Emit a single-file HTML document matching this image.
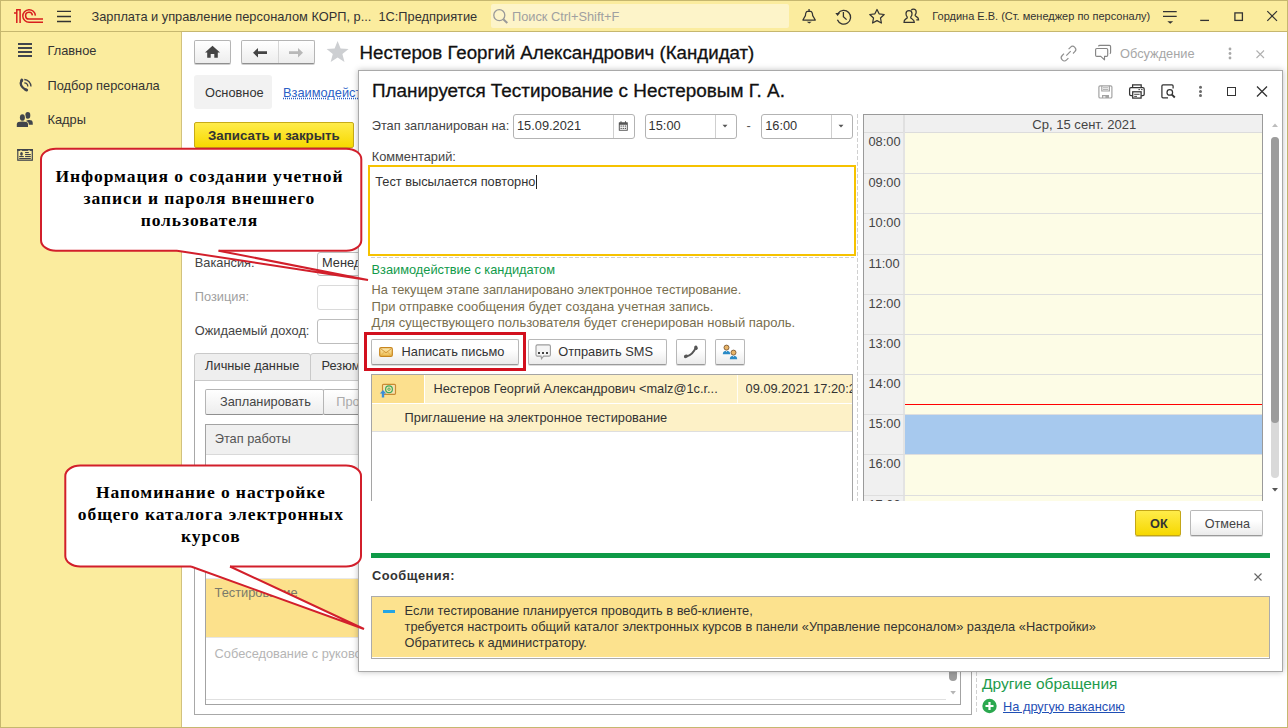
<!DOCTYPE html>
<html><head><meta charset="utf-8">
<style>
*{margin:0;padding:0;box-sizing:border-box}
html,body{width:1288px;height:728px;overflow:hidden;background:#fff}
body{position:relative;font-family:"Liberation Sans",sans-serif;font-size:13px;color:#333}
.a{position:absolute}
.t{position:absolute;white-space:nowrap;line-height:1}
svg{position:absolute;overflow:visible}
.sb{font-family:"Liberation Serif",serif;font-weight:bold}
</style></head><body>

<!-- 10_frame.py -->

<div class="a" style="left:0px;top:0px;width:1288px;height:728px;background:#FBEC9E"></div>
<div class="a" style="left:0px;top:0px;width:1288px;height:1px;background:#C6B76F"></div>
<div class="a" style="left:0px;top:31px;width:1288px;height:1px;background:#C6B76F"></div>
<div class="a" style="left:0px;top:0px;width:1px;height:728px;background:#C6B76F"></div>
<div class="a" style="left:1287px;top:0px;width:1px;height:728px;background:#C6B76F"></div>
<div class="a" style="left:0px;top:726.5px;width:1288px;height:1.5px;background:#C6B76F"></div>
<div class="a" style="left:182px;top:32px;width:1105px;height:695px;background:#fff"></div>
<div class="a" style="left:181px;top:32px;width:1px;height:695px;background:#D2C27E"></div>
<svg style="left:0px;top:0px;" width="60" height="30" viewBox="0 0 60 30"><g fill="none" stroke="#D81E1E" stroke-width="1.5"><path d="M14 12.9 H16.8 M16.8 23 V9.7 H20.1 V23"/><path d="M35.4 15.6 A6.3 6.3 0 1 0 29.2 22.3 H43"/><path d="M32.4 15.4 A3.4 3.4 0 1 0 29.2 19.1 H43"/></g></svg>
<svg style="left:0px;top:0px;" width="80" height="30" viewBox="0 0 80 30"><g stroke="#333" stroke-width="1.3"><path d="M57 11.4H71M57 16.5H71M57 21.5H71"/></g></svg>
<div class="t" style="left:91.50px;top:10.86px;font-size:12.8px;color:#333">Зарплата и управление персоналом КОРП, р...&nbsp; 1С:Предприятие</div>
<div class="a" style="left:491px;top:4px;width:298px;height:24px;background:#FDF4C9;border-radius:2px"></div>
<svg style="left:0px;top:0px;" width="520" height="30" viewBox="0 0 520 30"><g fill="none" stroke="#999" stroke-width="1.3"><circle cx="499.3" cy="15.2" r="5.5"/><path d="M503.3 19.2 L507.3 22.9" stroke-width="2"/></g></svg>
<div class="t" style="left:512.00px;top:10.56px;font-size:12.8px;color:#A0A0A0">Поиск Ctrl+Shift+F</div>
<svg style="left:0px;top:0px;left:0;top:0" width="1288" height="30" viewBox="0 0 1288 30"><g fill="none" stroke="#333" stroke-width="1.25" stroke-linejoin="round"><path d="M802.9 20 H815.3 L812.7 15.6 C812.5 13 812.1 11.4 810.5 11.4 H807.5 C805.9 11.4 805.6 13 805.4 15.6 Z"/></g><rect x="808.4" y="9" width="1.3" height="2.4" fill="#333"/><path d="M806.7 21.8 H811.7 L809.2 23.6Z" fill="#333"/><g fill="none" stroke="#333" stroke-width="1.3"><path d="M838.1 13.4 A6.85 6.85 0 1 1 837.4 19.8"/><path d="M843.4 12 V16.6 L846.6 19.6"/></g><path d="M835.3 13 H840 L837.6 15.9Z" fill="#333"/><path d="M877 9.5 L879.1 13.8 L884.2 14.5 L880.5 18 L881.4 23 L877 20.6 L872.6 23 L873.5 18 L869.8 14.5 L874.9 13.8 Z" fill="none" stroke="#333" stroke-width="1.25" stroke-linejoin="round"/><g fill="none" stroke="#333" stroke-width="1.25"><path d="M904 22.3 H914.3 C914.5 19.5 912 19 910.8 18 C910.7 17.5 910.7 17 911 16.6 C911.8 15.8 912 14.8 912 13.7 C912 11.9 910.7 10.7 909 10.7 C907.3 10.7 906 11.9 906 13.7 C906 14.8 906.3 15.8 907 16.6 C907.3 17 907.3 17.5 907.2 18 C906 19 903.6 19.5 904 22.3Z"/><path d="M911.2 10.3 C911.7 9.5 912.5 9.1 913.5 9.1 C915.1 9.1 916.2 10.2 916.2 12 C916.2 13 915.9 14 915.2 14.8 C915 15.3 915.1 15.7 915.5 16 C916.8 17 918.8 17.5 918.6 19.9 H916.3"/></g><g stroke="#333" stroke-width="1.2"><path d="M1163 11.6H1176.7M1163 16.4H1176.7"/></g><path d="M1167.3 21.2 H1173.2 L1170.25 23.7Z" fill="#333"/><path d="M1200.2 20.4 H1209" stroke="#333" stroke-width="1.3"/><rect x="1234.9" y="12.9" width="7.5" height="7.5" fill="none" stroke="#333" stroke-width="1.3"/><path d="M1267.3 11.2 L1277 20.9 M1277 11.2 L1267.3 20.9" stroke="#333" stroke-width="1.2"/></svg>
<div class="t" style="left:932.30px;top:10.89px;font-size:11px;color:#333">Гордина Е.В. (Ст. менеджер по персоналу)</div>
<!-- 20_sidebar.py -->

<svg style="left:0px;top:0px;top:0" width="40" height="40" viewBox="0 0 40 40"><g stroke="#40444C" stroke-width="2"><path d="M18 44H32M18 48H32M18 52H32M18 56H32"/></g></svg>
<div class="t" style="left:47.50px;top:44.56px;font-size:12.8px;color:#333">Главное</div>
<svg style="left:0px;top:0px;left:0;top:0" width="60" height="100" viewBox="0 0 60 100"><path d="M21.6 80.6 Q18.6 85.5 25.8 89.9" fill="none" stroke="#40444C" stroke-width="2.4"/><ellipse cx="21.7" cy="80.4" rx="1.5" ry="1.9" transform="rotate(25 21.7 80.4)" fill="#40444C"/><ellipse cx="26.3" cy="89.8" rx="1.9" ry="1.5" transform="rotate(25 26.3 89.8)" fill="#40444C"/><g fill="none" stroke="#40444C" stroke-width="1.3"><path d="M24.3 82.9 A3.7 3.7 0 0 1 27.8 86.6"/><path d="M24.3 79.5 A7 7 0 0 1 31 86.6"/></g></svg>
<div class="t" style="left:47.50px;top:79.56px;font-size:12.8px;color:#333">Подбор персонала</div>
<svg style="left:0px;top:0px;left:0;top:0" width="60" height="140" viewBox="0 0 60 140"><g fill="#40444C"><ellipse cx="27.8" cy="115.4" rx="2.5" ry="3.3"/><path d="M26 121 C27.5 119.8 30.5 119.6 31.8 120.6 C32.6 121.3 32.8 122.5 32.8 124.8 H27 Z"/></g><g fill="#40444C" stroke="#FBEC9E" stroke-width="1.6" paint-order="stroke"><ellipse cx="22.4" cy="117.6" rx="2.5" ry="3.4"/><path d="M16.8 127 V124 C16.8 122.4 19 121.6 22.4 121.6 C25.8 121.6 28 122.4 28 124 V127 Z"/></g></svg>
<div class="t" style="left:47.50px;top:114.16px;font-size:12.8px;color:#333">Кадры</div>
<svg style="left:0px;top:0px;left:0;top:0" width="60" height="170" viewBox="0 0 60 170"><rect x="17.8" y="149.6" width="14.5" height="10.6" fill="none" stroke="#40444C" stroke-width="1.2"/><rect x="17.2" y="149" width="15.7" height="1.9" fill="#40444C"/><circle cx="21" cy="151.2" r="1.05" fill="#FBEC9E"/><circle cx="29" cy="151.2" r="1.05" fill="#FBEC9E"/><g fill="#40444C"><ellipse cx="21.5" cy="153.9" rx="1.35" ry="1.8"/><rect x="19.2" y="156" width="4.6" height="1.1"/><rect x="25.1" y="152" width="3.7" height="1.1"/><rect x="25.1" y="154" width="5.7" height="1.1"/><rect x="25.1" y="156" width="5.7" height="1.1"/><rect x="19.2" y="158" width="11.6" height="1.1"/></g></svg>
<!-- 30_mainform.py -->

<div class="a" style="left:194px;top:40px;width:37px;height:24px;background:linear-gradient(#FFFFFF,#EDEDED);border:1px solid #B5B5B5;border-bottom-color:#8F8F8F;border-radius:2px;box-shadow:0 1px 0 #D0D0D0"></div>
<svg style="left:194px;top:40px;" width="37" height="24" viewBox="0 0 37 24"><path d="M18.5 5.8 L26 12.6 H23.8 V17.8 H20.3 V14 H16.7 V17.8 H13.2 V12.6 H11 Z" fill="#454545"/></svg>
<div class="a" style="left:241px;top:40px;width:74px;height:24px;background:linear-gradient(#FFFFFF,#EDEDED);border:1px solid #B5B5B5;border-bottom-color:#8F8F8F;border-radius:2px;box-shadow:0 1px 0 #D0D0D0"></div>
<div class="a" style="left:278px;top:41px;width:1px;height:22px;background:#D6D6D6"></div>
<svg style="left:241px;top:40px;" width="74" height="24" viewBox="0 0 74 24"><path d="M12 12.7 L17 8 V11.3 H26 V14.1 H17 V17.4 Z" fill="#444"/><path d="M62 12.7 L57 8 V11.3 H48 V14.1 H57 V17.4 Z" fill="#B8B8B8"/></svg>
<svg style="left:324px;top:39px;" width="28" height="26" viewBox="0 0 28 26"><path d="M13.6 2 L16.6 9.6 L24.6 10 L18.4 15 L20.5 23 L13.6 18.4 L6.7 23 L8.8 15 L2.6 10 L10.6 9.6Z" fill="#CDCFD2"/></svg>
<div class="t" style="left:359.50px;top:43.87px;font-size:18.7px;color:#111;-webkit-text-stroke:0.3px #111">Нестеров Георгий Александрович (Кандидат)</div>
<svg style="left:0px;top:0px;left:0;top:0" width="1288" height="70" viewBox="0 0 1288 70"><g fill="none" stroke="#8E8E8E" stroke-width="1.15"><path d="M1068.6 49.1 L1070.4 47.3 A3.1 3.1 0 0 1 1074.8 51.7 L1073 53.5"/><path d="M1064 53.7 L1062.2 55.5 A3.1 3.1 0 0 0 1066.6 59.9 L1068.4 58.1"/><path d="M1066.3 55.6 L1070.7 51.1"/></g><g fill="none" stroke="#858585" stroke-width="1.15" stroke-linejoin="round"><path d="M1098.5 46.4 Q1098.7 45.4 1099.8 45.4 H1109.4 Q1110.6 45.4 1110.6 46.6 V52.4 Q1110.6 53.3 1109.8 53.6"/><path d="M1096.8 48.5 H1106.5 Q1107.7 48.5 1107.7 49.7 V55.2 Q1107.7 56.4 1106.5 56.4 H1104.5 V59.8 L1100.8 56.4 H1096.8 Q1095.6 56.4 1095.6 55.2 V49.7 Q1095.6 48.5 1096.8 48.5Z"/></g></svg>
<div class="t" style="left:1120.00px;top:48.06px;font-size:12.8px;color:#A6A6A6">Обсуждение</div>
<svg style="left:1225px;top:44px;" width="10" height="18" viewBox="0 0 10 18"><g fill="#A8A8A8"><circle cx="5" cy="5" r="1.4"/><circle cx="5" cy="9.5" r="1.4"/><circle cx="5" cy="14" r="1.4"/></g></svg>
<svg style="left:1252px;top:46px;" width="16" height="16" viewBox="0 0 16 16"><path d="M4.5 4.5L12 12M12 4.5L4.5 12" stroke="#B0B0B0" stroke-width="1.1"/></svg>
<div class="a" style="left:194px;top:75px;width:78px;height:34px;background:#F2F2F2;border-radius:3px"></div>
<div class="t" style="left:205.00px;top:86.66px;font-size:12.8px;color:#333">Основное</div>
<div class="t" style="left:283.00px;top:86.66px;font-size:12.8px;color:#2B5FC7;text-decoration:underline dotted">Взаимодействие</div>
<div class="a" style="left:194px;top:122px;width:160px;height:26px;background:linear-gradient(#FFEC4A,#F7D900);border:1px solid #C7AB18;border-radius:2px"></div>
<div class="t" style="left:208.00px;top:129.24px;font-size:13.3px;color:#333;font-weight:bold">Записать и закрыть</div>
<div class="t" style="left:194.80px;top:257.36px;font-size:12.8px;color:#444">Вакансия:</div>
<div class="a" style="left:317px;top:252px;width:60px;height:24px;border:1px solid #BDBDBD;border-radius:3px;background:#fff"></div>
<div class="t" style="left:322.00px;top:257.36px;font-size:12.8px;color:#333">Менеджер</div>
<div class="t" style="left:194.80px;top:291.16px;font-size:12.8px;color:#A0A0A0">Позиция:</div>
<div class="a" style="left:317px;top:285px;width:60px;height:25px;border:1px solid #DADADA;border-radius:3px;background:#fff"></div>
<div class="t" style="left:194.80px;top:325.16px;font-size:12.8px;color:#444">Ожидаемый доход:</div>
<div class="a" style="left:317px;top:319px;width:60px;height:25px;border:1px solid #BDBDBD;border-radius:3px;background:#fff"></div>
<div class="a" style="left:194px;top:353px;width:117px;height:28px;background:#EEEEEE;border:1px solid #C9C9C9;border-radius:3px 3px 0 0"></div>
<div class="t" style="left:205.10px;top:360.46px;font-size:12.8px;color:#333">Личные данные</div>
<div class="a" style="left:310px;top:353px;width:60px;height:28px;background:#EEEEEE;border:1px solid #C9C9C9;border-radius:3px 3px 0 0"></div>
<div class="t" style="left:321.50px;top:360.46px;font-size:12.8px;color:#333">Резюме</div>
<div class="a" style="left:194px;top:380px;width:778px;height:335px;border:1px solid #A8A8A8;border-top:1px solid #C9C9C9;background:#fff"></div>
<div class="a" style="left:205px;top:389px;width:119px;height:26px;background:linear-gradient(#FFFFFF,#EDEDED);border:1px solid #B5B5B5;border-bottom-color:#8F8F8F;border-radius:2px"></div>
<div class="a" style="left:323px;top:389px;width:60px;height:26px;background:linear-gradient(#FFFFFF,#EDEDED);border:1px solid #B5B5B5;border-bottom-color:#8F8F8F;border-radius:2px"></div>
<div class="t" style="left:220.00px;top:396.36px;font-size:12.8px;color:#444">Запланировать</div>
<div class="t" style="left:336.30px;top:396.36px;font-size:12.8px;color:#AAAAAA">Провести</div>
<div class="a" style="left:205px;top:424px;width:756px;height:281px;border:1px solid #A3A3A3;background:#fff"></div>
<div class="a" style="left:206px;top:425px;width:754px;height:30px;background:#F0F0F0;border-bottom:1px solid #D9D9D9"></div>
<div class="t" style="left:214.70px;top:433.16px;font-size:12.8px;color:#555">Этап работы</div>
<div class="a" style="left:206px;top:578px;width:754px;height:59px;background:#FCE18C;border-top:1px solid #E8E8E8"></div>
<div class="t" style="left:214.60px;top:586.56px;font-size:12.8px;color:#7A7A6A">Тестирование</div>
<div class="t" style="left:214.60px;top:647.56px;font-size:12.8px;color:#B5B5B5">Собеседование с руководителем</div>
<div class="a" style="left:206px;top:637px;width:754px;height:1px;background:#E6E6E6"></div>
<div class="a" style="left:206px;top:699px;width:740px;height:1px;background:#E0E0E0"></div>
<div class="a" style="left:949px;top:664px;width:8px;height:16.5px;background:#9C9C9C;border-radius:4px"></div>
<svg style="left:946px;top:688px;" width="12" height="8" viewBox="0 0 12 8"><path d="M4.3 3 H9.9 L7.1 6.5Z" fill="#B5B5B5"/></svg>
<svg style="left:0px;top:0px;left:0;top:0" width="1288" height="728" viewBox="0 0 1288 728"><path d="M976.5 672 V714" stroke="#D0D0D0" stroke-width="1" stroke-dasharray="4 2"/></svg>
<div class="t" style="left:982.00px;top:676.28px;font-size:15.5px;color:#1E9B4B">Другие обращения</div>
<svg style="left:981px;top:697px;" width="18" height="18" viewBox="0 0 18 18"><circle cx="8.5" cy="9" r="7.2" fill="#2BA84F"/><path d="M8.5 5 V13 M4.5 9 H12.5" stroke="#fff" stroke-width="2.2"/></svg>
<div class="t" style="left:1003.00px;top:700.56px;font-size:12.8px;color:#1F4FB5;text-decoration:underline">На другую вакансию</div>
<!-- 40_dialog.py -->

<div class="a" style="left:358px;top:70px;width:925px;height:602px;background:#fff;border:1px solid #A9A9A9;box-shadow:0 0 6px rgba(0,0,0,0.25)"></div>
<div class="t" style="left:372.00px;top:82.20px;font-size:18.9px;color:#111;-webkit-text-stroke:0.3px #111">Планируется Тестирование с Нестеровым Г. А.</div>
<svg style="left:0px;top:0px;left:0;top:0" width="1288" height="110" viewBox="0 0 1288 110"><g fill="none" stroke="#A3A3A3" stroke-width="1.2"><rect x="1098.9" y="85.8" width="13" height="12.2" rx="1.3"/><path d="M1101.8 85.8 V91 H1109.4 V85.8"/><path d="M1103 87.8 H1108.2 M1103 89.6 H1108.2" stroke-width="0.9"/><path d="M1102.6 98 V95.6 H1108.4 V98"/></g><rect x="1105.4" y="95.6" width="3" height="2.4" fill="#A3A3A3"/><g fill="none" stroke="#333" stroke-width="1.25"><path d="M1132.6 87.4 V84.9 H1141.2 V87.4"/><path d="M1132.6 95.6 H1131 Q1129.6 95.6 1129.6 94.2 V89 Q1129.6 87.6 1131 87.6 H1142.8 Q1144.2 87.6 1144.2 89 V94.2 Q1144.2 95.6 1142.8 95.6 H1141.2"/><rect x="1132.7" y="91.8" width="8.4" height="6.3" fill="#fff"/></g><path d="M1134.2 94.3 H1139.6 M1134.2 96.4 H1137" stroke="#333" stroke-width="0.9"/><path d="M1138.4 89.6 H1140 M1141 89.6 H1142.6" stroke="#333" stroke-width="0.9"/><g fill="none" stroke="#333" stroke-width="1.25"><path d="M1168 97.9 H1163 Q1161.9 97.9 1161.9 96.8 V86 Q1161.9 84.9 1163 84.9 H1172 Q1173.1 84.9 1173.1 86 V88.5"/><circle cx="1169.8" cy="92.4" r="2.8"/><path d="M1171.9 94.6 L1174.8 97.5" stroke-width="1.9"/></g></svg>
<svg style="left:1195px;top:82px;" width="10" height="18" viewBox="0 0 10 18"><g fill="#6A6A6A"><circle cx="5.5" cy="5.3" r="1.5"/><circle cx="5.5" cy="9.4" r="1.5"/><circle cx="5.5" cy="13.5" r="1.5"/></g></svg>
<div class="a" style="left:1227.4px;top:87px;width:8.8px;height:8.8px;border:1.3px solid #333"></div>
<svg style="left:1254px;top:84px;" width="16" height="16" viewBox="0 0 16 16"><path d="M3 2.5L13 12.5M13 2.5L3 12.5" stroke="#333" stroke-width="1.3"/></svg>
<div class="t" style="left:371.70px;top:120.26px;font-size:12.8px;color:#444">Этап запланирован на:</div>
<div class="a" style="left:513px;top:114px;width:122px;height:25px;border:1px solid #B3B3B3;border-radius:3px;background:#fff"></div>
<div class="a" style="left:613px;top:115px;width:1px;height:23px;background:#CFCFCF"></div>
<div class="t" style="left:517.00px;top:120.26px;font-size:12.8px;color:#333">15.09.2021</div>
<svg style="left:617px;top:120px;" width="12" height="12" viewBox="0 0 12 12"><g fill="#555"><rect x="1.8" y="2.3" width="9" height="8.5" rx="0.5"/></g><g fill="#fff"><rect x="2.8" y="4.8" width="7" height="5"/></g><g fill="#555"><rect x="3.5" y="5.5" width="1.3" height="1.2"/><rect x="5.6" y="5.5" width="1.3" height="1.2"/><rect x="7.7" y="5.5" width="1.3" height="1.2"/><rect x="3.5" y="7.8" width="1.3" height="1.2"/><rect x="5.6" y="7.8" width="1.3" height="1.2"/><rect x="7.7" y="7.8" width="1.3" height="1.2"/><rect x="3.5" y="1.2" width="1" height="2"/><rect x="8" y="1.2" width="1" height="2"/></g></svg>
<div class="a" style="left:645px;top:114px;width:92px;height:25px;border:1px solid #B3B3B3;border-radius:3px;background:#fff"></div>
<div class="a" style="left:715px;top:115px;width:1px;height:23px;background:#CFCFCF"></div>
<div class="t" style="left:648.60px;top:120.26px;font-size:12.8px;color:#333">15:00</div>
<svg style="left:720px;top:122px;" width="10" height="8" viewBox="0 0 10 8"><path d="M2.5 2.8 H7.5 L5 5.5Z" fill="#555"/></svg>
<div class="t" style="left:746.50px;top:120.26px;font-size:12.8px;color:#555">-</div>
<div class="a" style="left:761px;top:114px;width:92px;height:25px;border:1px solid #B3B3B3;border-radius:3px;background:#fff"></div>
<div class="a" style="left:831px;top:115px;width:1px;height:23px;background:#CFCFCF"></div>
<div class="t" style="left:765.20px;top:120.26px;font-size:12.8px;color:#333">16:00</div>
<svg style="left:836px;top:122px;" width="10" height="8" viewBox="0 0 10 8"><path d="M2.5 2.8 H7.5 L5 5.5Z" fill="#555"/></svg>
<div class="t" style="left:371.70px;top:150.56px;font-size:12.8px;color:#444">Комментарий:</div>
<div class="a" style="left:368px;top:165px;width:488px;height:91px;border:2px solid #F6C200;background:#fff"></div>
<div class="t" style="left:375.20px;top:174.56px;font-size:12.8px;color:#333">Тест высылается повторно<span style="display:inline-block;width:1px;height:14px;background:#222;vertical-align:-3px;margin-left:0.5px"></span></div>
<svg style="left:0px;top:0px;left:0;top:0" width="1288" height="728" viewBox="0 0 1288 728"><path d="M371 257.5 H854" stroke="#D0D0D0" stroke-width="1" stroke-dasharray="4 2"/><path d="M857.5 114 V501" stroke="#D0D0D0" stroke-width="1" stroke-dasharray="4 2"/></svg>
<div class="t" style="left:371.50px;top:264.16px;font-size:12.8px;color:#119A4A">Взаимодействие с кандидатом</div>
<div class="t" style="left:371.60px;top:284.36px;font-size:12.8px;color:#786E4E">На текущем этапе запланировано электронное тестирование.</div>
<div class="t" style="left:371.60px;top:300.29px;font-size:13.01px;color:#786E4E">При отправке сообщения будет создана учетная запись.</div>
<div class="t" style="left:371.60px;top:316.29px;font-size:13.01px;color:#786E4E">Для существующего пользователя будет сгенерирован новый пароль.</div>
<div class="a" style="left:371px;top:339px;width:148px;height:26px;background:linear-gradient(#FFFFFF 40%,#EBEBEB);border:1px solid #B8B8B8;border-bottom-color:#9A9A9A;border-radius:2px;box-shadow:0 1px 0 #DCDCDC"></div>
<svg style="left:0px;top:0px;left:0;top:0" width="400" height="370" viewBox="0 0 400 370"><defs><linearGradient id="eg" x1="0" y1="0" x2="0" y2="1"><stop offset="0" stop-color="#FDEBB5"/><stop offset="1" stop-color="#EDBB4E"/></linearGradient></defs><rect x="379.7" y="347.7" width="12.6" height="8.6" rx="1.3" fill="url(#eg)" stroke="#C8861E" stroke-width="1.2"/><path d="M380.5 348.5 L386 352.8 L391.5 348.5" fill="none" stroke="#CD9030" stroke-width="0.9"/><path d="M381 355.5 L384.6 351.8 M391 355.5 L387.4 351.8" fill="none" stroke="#D9A545" stroke-width="0.7"/></svg>
<div class="t" style="left:401.60px;top:345.96px;font-size:12.8px;color:#333">Написать письмо</div>
<div class="a" style="left:363.5px;top:332px;width:162.5px;height:39px;border:3px solid #D2101E"></div>
<div class="a" style="left:528px;top:339px;width:139px;height:26px;background:linear-gradient(#FFFFFF 40%,#EBEBEB);border:1px solid #B8B8B8;border-bottom-color:#9A9A9A;border-radius:2px;box-shadow:0 1px 0 #DCDCDC"></div>
<svg style="left:0px;top:0px;left:0;top:0" width="600" height="370" viewBox="0 0 600 370"><path d="M537.4 344.9 H549 Q550.4 344.9 550.4 346.3 V354.7 Q550.4 356.1 549 356.1 H543.6 L541.5 358.8 L541 356.1 H537.4 Q536 356.1 536 354.7 V346.3 Q536 344.9 537.4 344.9Z" fill="#F4F4F4" stroke="#9C9C9C" stroke-width="1.1"/><g fill="#444"><rect x="538" y="352" width="2" height="2"/><rect x="542" y="352" width="2" height="2"/><rect x="546" y="352" width="2" height="2"/></g></svg>
<div class="t" style="left:558.20px;top:346.06px;font-size:12.8px;color:#333">Отправить SMS</div>
<div class="a" style="left:676px;top:339px;width:30px;height:26px;background:linear-gradient(#FFFFFF 40%,#EBEBEB);border:1px solid #B8B8B8;border-bottom-color:#9A9A9A;border-radius:2px;box-shadow:0 1px 0 #DCDCDC"></div>
<svg style="left:676px;top:338px;" width="30" height="28" viewBox="0 0 30 28"><path d="M10.3 18.6 Q16.8 16.8 19.8 9.6" fill="none" stroke="#555" stroke-width="2"/><ellipse cx="10" cy="18.3" rx="2.2" ry="1.7" transform="rotate(-25 10 18.3)" fill="#555"/><ellipse cx="20" cy="9.8" rx="1.7" ry="2.2" transform="rotate(-25 20 9.8)" fill="#555"/></svg>
<div class="a" style="left:715px;top:339px;width:30px;height:26px;background:linear-gradient(#FFFFFF 40%,#EBEBEB);border:1px solid #B8B8B8;border-bottom-color:#9A9A9A;border-radius:2px;box-shadow:0 1px 0 #DCDCDC"></div>
<svg style="left:715px;top:338px;" width="30" height="28" viewBox="0 0 30 28"><g><path d="M7.8 16.2 C7.8 13.8 9.5 12.8 11.5 12.8 C13.5 12.8 15.2 13.8 15.2 16.2 Z" fill="#2A8AC6"/><path d="M10.6 12.8 L11.5 14 L12.4 12.8Z" fill="#fff"/><circle cx="11.5" cy="9.6" r="2.5" fill="#E9B568" stroke="#6E4B28" stroke-width="0.8"/><path d="M14.8 21.2 C14.8 18.8 16.5 17.8 18.5 17.8 C20.5 17.8 22.2 18.8 22.2 21.2 Z" fill="#2A8AC6"/><path d="M17.6 17.8 L18.5 19 L19.4 17.8Z" fill="#fff"/><circle cx="18.5" cy="14.6" r="2.5" fill="#E9B568" stroke="#6E4B28" stroke-width="0.8"/></g></svg>
<div class="a" style="left:371px;top:374px;width:482px;height:127px;border:1px solid #A5A5A5;border-bottom:none;background:#fff"></div>
<div class="a" style="left:372px;top:375px;width:52px;height:28px;background:#FCE08E"></div>
<div class="a" style="left:425px;top:375px;width:427px;height:28px;background:#FDF1C7"></div>
<div class="a" style="left:737px;top:375px;width:1px;height:28px;background:#FFFDF5"></div>
<div class="a" style="left:372px;top:404px;width:480px;height:27px;background:#FDF1C7"></div>
<div class="a" style="left:372px;top:431px;width:480px;height:1px;background:#DEDEDE"></div>
<svg style="left:378px;top:382px;" width="20" height="18" viewBox="0 0 20 18"><rect x="4.5" y="2.3" width="13" height="10" rx="1" fill="#F5E2B0" stroke="#C88B33" stroke-width="1.2"/><circle cx="11" cy="7.2" r="3.4" fill="none" stroke="#3DAA5A" stroke-width="1.2"/><circle cx="11" cy="7.2" r="1.2" fill="none" stroke="#3DAA5A" stroke-width="0.9"/><path d="M5 8 L1.8 11.5 H3.8 V15.5 H6.2 V11.5 H8.2Z" fill="#3A8FD9"/></svg>
<div class="t" style="left:433.50px;top:383.16px;font-size:12.8px;color:#333">Нестеров Георгий Александрович &lt;malz@1c.r...</div>
<div class="t" style="left:745.60px;top:383.16px;font-size:12.8px;color:#333;width:106px;overflow:hidden">09.09.2021 17:20:27</div>
<div class="t" style="left:404.60px;top:412.46px;font-size:12.8px;color:#333">Приглашение на электронное тестирование</div>
<!-- 50_calendar.py -->

<div class="a" style="left:863px;top:114px;width:400px;height:387px;border:1px solid #9A9A9A;border-bottom:none;background:#FDFCE6;overflow:hidden"></div>
<div class="a" style="left:864px;top:115px;width:398px;height:18px;background:#F0F0F0;border-bottom:1px solid #DCDCDC"></div>
<div class="a" style="left:864px;top:133px;width:41px;height:368px;background:#F0F0F0;border-right:2px solid #E3E3E3"></div>
<div class="a" style="left:903px;top:115px;width:2px;height:18px;background:#E0E0E0"></div>
<div class="t" style="left:1032.30px;top:118.35px;font-size:13.05px;color:#444">Ср, 15 сент. 2021</div>
<div class="a" style="left:864px;top:173px;width:398px;height:1px;background:#DEDEDE"></div>
<div class="a" style="left:864px;top:213px;width:398px;height:1px;background:#DEDEDE"></div>
<div class="a" style="left:864px;top:254px;width:398px;height:1px;background:#DEDEDE"></div>
<div class="a" style="left:864px;top:294px;width:398px;height:1px;background:#DEDEDE"></div>
<div class="a" style="left:864px;top:334px;width:398px;height:1px;background:#DEDEDE"></div>
<div class="a" style="left:864px;top:374px;width:398px;height:1px;background:#DEDEDE"></div>
<div class="a" style="left:864px;top:414px;width:398px;height:1px;background:#DEDEDE"></div>
<div class="a" style="left:864px;top:454px;width:398px;height:1px;background:#DEDEDE"></div>
<div class="a" style="left:864px;top:495px;width:398px;height:1px;background:#DEDEDE"></div>
<div class="t" style="left:868.50px;top:135.86px;font-size:12.8px;color:#444">08:00</div>
<div class="t" style="left:868.50px;top:176.86px;font-size:12.8px;color:#444">09:00</div>
<div class="t" style="left:868.50px;top:216.86px;font-size:12.8px;color:#444">10:00</div>
<div class="t" style="left:868.50px;top:257.86px;font-size:12.8px;color:#444">11:00</div>
<div class="t" style="left:868.50px;top:297.86px;font-size:12.8px;color:#444">12:00</div>
<div class="t" style="left:868.50px;top:337.86px;font-size:12.8px;color:#444">13:00</div>
<div class="t" style="left:868.50px;top:377.86px;font-size:12.8px;color:#444">14:00</div>
<div class="t" style="left:868.50px;top:417.86px;font-size:12.8px;color:#444">15:00</div>
<div class="t" style="left:868.50px;top:457.86px;font-size:12.8px;color:#444">16:00</div>
<div class="t" style="left:868.50px;top:498.86px;font-size:12.8px;color:#444">17:00</div>
<div class="a" style="left:905px;top:415px;width:357px;height:39px;background:#A7C9EE"></div>
<div class="a" style="left:905px;top:404px;width:357px;height:1px;background:#FF0000"></div>
<div class="a" style="left:840px;top:501px;width:430px;height:12px;background:#fff"></div>
<svg style="left:1268px;top:120px;" width="14" height="10" viewBox="0 0 14 10"><path d="M4 7 H10 L7 3.5Z" fill="#BDBDBD"/></svg>
<div class="a" style="left:1271px;top:137px;width:8px;height:341px;background:#D9D9D9;border-radius:4px"></div>
<div class="a" style="left:1271px;top:137px;width:8px;height:286px;background:#9C9C9C;border-radius:4px"></div>
<svg style="left:1268px;top:485px;" width="14" height="10" viewBox="0 0 14 10"><path d="M4 3 H10 L7 6.5Z" fill="#555"/></svg>
<div class="a" style="left:1135px;top:510px;width:46px;height:26px;background:linear-gradient(#FFEC4A,#F6D800);border:1px solid #C4A617;border-radius:2px;box-shadow:0 1px 0 #D8D0A0"></div>
<div class="t" style="left:1149.80px;top:516.66px;font-size:13.4px;color:#333;font-weight:bold;transform:scaleX(0.95);transform-origin:left">ОК</div>
<div class="a" style="left:1190px;top:510px;width:73px;height:26px;background:linear-gradient(#FFFFFF 40%,#EBEBEB);border:1px solid #B8B8B8;border-bottom-color:#9A9A9A;border-radius:2px;box-shadow:0 1px 0 #DCDCDC"></div>
<div class="t" style="left:1204.80px;top:517.73px;font-size:12.6px;color:#444">Отмена</div>
<div class="a" style="left:371px;top:553px;width:899px;height:5px;background:#0E9A47"></div>
<div class="t" style="left:371.90px;top:569.56px;font-size:12.8px;color:#333;font-weight:bold;letter-spacing:0.5px">Сообщения:</div>
<svg style="left:1250px;top:569px;" width="16" height="16" viewBox="0 0 16 16"><path d="M4.5 4.5L11.5 11.5M11.5 4.5L4.5 11.5" stroke="#666" stroke-width="1.1"/></svg>
<div class="a" style="left:371px;top:596px;width:899px;height:63px;background:#FCE28E;border:1px solid #ABABAB;box-shadow:inset 0 -1px 0 #fff"></div>
<div class="a" style="left:383px;top:610px;width:11.5px;height:2.5px;background:#23A5E5"></div>
<div class="t" style="left:404.60px;top:604.96px;font-size:12.8px;color:#333">Если тестирование планируется проводить в веб-клиенте,</div>
<div class="t" style="left:404.60px;top:620.86px;font-size:12.8px;color:#333">требуется настроить общий каталог электронных курсов в панели «Управление персоналом» раздела «Настройки»</div>
<div class="t" style="left:404.60px;top:636.66px;font-size:12.8px;color:#333">Обратитесь к администратору.</div>
<!-- 90_callouts.py -->

<svg style="left:0px;top:0px;left:0;top:0" width="1288" height="728" viewBox="0 0 1288 728"><path d="M56 148.7 H346.3 A15 10.5 0 0 1 361.3 159.2 V240.2 A15 10.5 0 0 1 346.3 250.7 H218.6 L368 280 L177 250.7 H56 A15 10.5 0 0 1 41 240.2 V159.2 A15 10.5 0 0 1 56 148.7 Z" fill="#fff"/><path d="M177 250.7 H56 A15 10.5 0 0 1 41 240.2 V159.2 A15 10.5 0 0 1 56 148.7 H346.3 A15 10.5 0 0 1 361.3 159.2 V240.2 A15 10.5 0 0 1 346.3 250.7 H218.6" fill="none" stroke="#D21F2B" stroke-width="2"/><path d="M177 250.7 L368 280 L218.6 250.7" fill="none" stroke="#D21F2B" stroke-width="2" stroke-linejoin="miter" stroke-miterlimit="1"/></svg>
<div class="t" style="left:-0.60px;top:168.49px;font-size:17.5px;color:#000;font-weight:bold;letter-spacing:0.93px;font-family:'Liberation Serif',serif;text-align:center;width:400px">Информация о создании учетной</div>
<div class="t" style="left:-0.60px;top:190.19px;font-size:17.5px;color:#000;font-weight:bold;letter-spacing:0.93px;font-family:'Liberation Serif',serif;text-align:center;width:400px">записи и пароля внешнего</div>
<div class="t" style="left:-0.60px;top:211.99px;font-size:17.5px;color:#000;font-weight:bold;letter-spacing:0.93px;font-family:'Liberation Serif',serif;text-align:center;width:400px">пользователя</div>
<svg style="left:0px;top:0px;left:0;top:0" width="1288" height="728" viewBox="0 0 1288 728"><path d="M80.3 465.5 H346 A15 10.5 0 0 1 361 476.0 V556.0 A15 10.5 0 0 1 346 566.5 H230 L364 629 L191 566.5 H80.3 A15 10.5 0 0 1 65.3 556.0 V476.0 A15 10.5 0 0 1 80.3 465.5 Z" fill="#fff"/><path d="M191 566.5 H80.3 A15 10.5 0 0 1 65.3 556.0 V476.0 A15 10.5 0 0 1 80.3 465.5 H346 A15 10.5 0 0 1 361 476.0 V556.0 A15 10.5 0 0 1 346 566.5 H230" fill="none" stroke="#D21F2B" stroke-width="2"/><path d="M191 566.5 L364 629 L230 566.5" fill="none" stroke="#D21F2B" stroke-width="2" stroke-linejoin="miter" stroke-miterlimit="1"/></svg>
<div class="t" style="left:10.80px;top:484.29px;font-size:17.5px;color:#000;font-weight:bold;letter-spacing:0.93px;font-family:'Liberation Serif',serif;text-align:center;width:400px">Напоминание о настройке</div>
<div class="t" style="left:10.80px;top:506.19px;font-size:17.5px;color:#000;font-weight:bold;letter-spacing:0.93px;font-family:'Liberation Serif',serif;text-align:center;width:400px">общего каталога электронных</div>
<div class="t" style="left:10.80px;top:528.29px;font-size:17.5px;color:#000;font-weight:bold;letter-spacing:0.93px;font-family:'Liberation Serif',serif;text-align:center;width:400px">курсов</div>
<!-- _lib.py -->


</body></html>
